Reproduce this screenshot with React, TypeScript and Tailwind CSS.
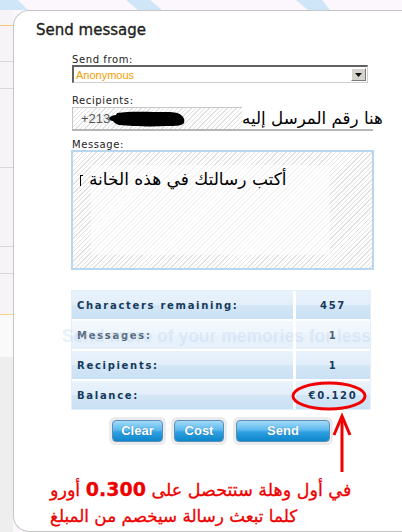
import React from "react";

const hatch =
  "bg-[image:repeating-linear-gradient(135deg,#e2e2e2_0px,#e2e2e2_1px,#ffffff_1px,#ffffff_3.2px)]";

function Label({ children }: { children: React.ReactNode }) {
  return (
    <div className="h-[11px] leading-[11px] text-[10px] tracking-[0.6px] text-[#222]">
      {children}
    </div>
  );
}

function Row({
  label,
  value,
  faded,
}: {
  label: string;
  value: string;
  faded?: boolean;
}) {
  const bg = faded
    ? "bg-[image:linear-gradient(#f3f8fd,#eef5fc_50%,#e9f2fb_51%,#e6f0fa)]"
    : "bg-[image:linear-gradient(#e9f3fc,#e2eefa_48%,#d3e6f6_52%,#cae0f4)]";
  const color = faded ? "text-[#4f6070]" : "text-[#153a5c]";
  return (
    <div className="flex h-[28px] gap-[3px]">
      <div
        className={`w-[221px] h-full flex items-center pl-[5px] text-[10px] font-bold tracking-[1.7px] ${bg} ${color}`}
      >
        {label}
      </div>
      <div
        className={`flex-1 h-full flex items-center justify-center text-[10px] font-bold tracking-[1.7px] ${bg} ${color}`}
      >
        {value}
      </div>
    </div>
  );
}

function Btn({ w, label, ml }: { w: string; label: string; ml: string }) {
  return (
    <div className={`${w} ${ml} h-[28px] rounded-[6px] bg-[#ebebeb] p-[3px]`}>
      <div className="h-[22px] w-full rounded-[4px] border border-[#5b8fb9] bg-[image:linear-gradient(#a3daf8,#5bb9ee_45%,#2ea0e0_55%,#0d86cb)] flex items-center justify-center text-white font-bold text-[13px] font-['Liberation_Sans',sans-serif] [text-shadow:0_0_1px_rgba(0,60,120,0.5)]">
        {label}
      </div>
    </div>
  );
}

export default function App() {
  return (
    <div className="relative w-[402px] h-[532px] overflow-hidden bg-[#fcf7fc] font-['DejaVu_Sans',sans-serif]">
      {/* top decorative band */}
      <svg width="402" height="10" className="block">
        <rect x="0" y="0" width="402" height="10" fill="#fcf7fc" />
        <polygon points="-10,0 18,0 28,10 0,10" fill="#cfe5f8" />
        <polygon points="126,0 150,0 162,10 138,10" fill="#cfe5f8" />
        <polygon points="296,0 322,0 330,10 308,10" fill="#cfe5f8" />
      </svg>

      <div className="flex h-[522px]">
        {/* left strip */}
        <div className="w-[13px] h-full flex flex-col bg-[#f6f4f7]">
          <div className="h-[15px]" />
          <div className="h-px bg-[#f8c878]" />
          <div className="h-[35px]" />
          <div className="h-px bg-[#d8d8d8]" />
          <div className="h-[26px]" />
          <div className="h-px bg-[#d8d8d8]" />
          <div className="h-[78px]" />
          <div className="h-px bg-[#d8d8d8]" />
          <div className="h-[78px]" />
          <div className="h-px bg-[#d8d8d8]" />
          <div className="h-[26px]" />
          <div className="h-px bg-[#d8d8d8]" />
          <div className="h-[40px]" />
          <div className="h-px bg-[#f9d383]" />
          <div className="h-[42px] bg-[#fafafa]" />
          <div className="flex-1 bg-[#efeeef]" />
        </div>

        {/* panel */}
        <div className="flex-1 h-full bg-white border-l border-t border-b border-[#c6c6c6] rounded-tl-[16px] rounded-bl-[16px] flex flex-col">
          <div className="mt-[10px] ml-[22px] h-[18px] leading-[18px] text-[15px] text-[#1e1e1e] [-webkit-text-stroke:0.35px_#1e1e1e]">
            Send message
          </div>

          <div className="ml-[58px] w-[301px] flex flex-col">
            <div className="mt-[15px]">
              <Label>Send from:</Label>
            </div>
            <div className="h-[18px] w-[296px] flex items-center border-t-2 border-l-2 border-b border-r border-[#626262] border-b-[#d0d0d0] border-r-[#d0d0d0] bg-white">
              <span className="flex-1 pl-[2px] text-[11px] leading-[14px] text-[#f59d00] font-['Liberation_Sans',sans-serif]">
                Anonymous
              </span>
              <div className="w-[15px] h-[13px] mr-[1px] bg-[#d6d3cd] border border-t-white border-l-white border-b-[#7a7a7a] border-r-[#7a7a7a] flex items-center justify-center">
                <svg width="7" height="4" viewBox="0 0 7 4">
                  <polygon points="0,0 7,0 3.5,4" fill="#111" />
                </svg>
              </div>
            </div>

            <div className="mt-[12px]">
              <Label>Recipients:</Label>
            </div>
            <div className="mt-[1px] w-[301px] h-[24px] flex border-b-2 border-[#b6b6b6]">
              <div
                className={`shrink-0 w-[170px] h-full border-t border-l border-[#c6c6c6] ${hatch} flex items-center pl-[8px]`}
              >
                <span className="text-[13px] text-[#555] font-['Liberation_Sans',sans-serif]">
                  +213
                </span>
                <svg width="78" height="18" viewBox="0 0 78 18" className="-ml-[1px]">
                  <path
                    d="M0,8 C2,6 4,5 7,5 L8,3 C20,1 40,2 58,2 C66,2 70,3 72,5 C75,7 76,10 75,13 C73,16 66,16 58,16 C40,17 22,16 10,15 C6,14 5,12 4,11 C2,11 0,10 0,8 Z"
                    fill="#000"
                  />
                </svg>
              </div>
              <div className="w-[131px] shrink-0 h-full flex items-center">
                <span
                  dir="rtl"
                  className="whitespace-nowrap text-[16.7px] leading-[22px] text-black"
                >
                  هنا رقم المرسل إليه
                </span>
              </div>
            </div>

            <div className="mt-[8px]">
              <Label>Message:</Label>
            </div>
            <div
              className={`relative -ml-px w-[303px] h-[120px] border-2 border-[#b8d7ef] ${hatch} pt-[13px] pl-[18px]`}
            >
              <div className="w-[239px] h-[90px] bg-white/60" />
              <div className="absolute left-[7px] top-[15px] h-[24px] flex items-center gap-[6px]">
                <span className="w-[3px] h-[11px] border-l border-t border-black mt-[2px]" />
                <span
                  dir="rtl"
                  className="whitespace-nowrap text-[17px] leading-[24px] text-black"
                >
                  أكتب رسالتك في هذه الخانة
                </span>
              </div>
            </div>

            <div className="mt-[20px] -ml-px w-[300px] border border-[#e3eff9] bg-white flex flex-col gap-[2px]">
              <Row label="Characters remaining:" value="457" />
              <Row label="Messages:" value="1" faded />
              <Row label="Recipients:" value="1" />
              <Row label="Balance:" value="€0.120" />
            </div>

            <div className="mt-[7px] flex">
              <Btn w="w-[57px]" ml="ml-[37px]" label="Clear" />
              <Btn w="w-[56px]" ml="ml-[5px]" label="Cost" />
              <Btn w="w-[100px]" ml="ml-[6px]" label="Send" />
            </div>
          </div>

          <div className="mt-[31px] ml-[36px] flex flex-col items-start text-[#ee0000] text-[17.5px] leading-[26px] [-webkit-text-stroke:0.3px_#ee0000]">
            <span dir="rtl" className="whitespace-nowrap">
              في أول وهلة ستتحصل على{" "}
              <b className="font-bold text-[19px]">0.300</b> أورو
            </span>
            <span dir="rtl" className="whitespace-nowrap text-[16.8px]">
              كلما تبعث رسالة سيخصم من المبلغ
            </span>
          </div>
        </div>
      </div>

      {/* ghost watermark text */}
      <div className="absolute left-[22px] top-[325px] w-[349px] h-[22px] overflow-hidden flex justify-end pointer-events-none">
        <span className="whitespace-nowrap text-[17.5px] leading-[22px] font-bold font-['Liberation_Sans',sans-serif] text-[rgba(175,205,238,0.3)]">
          Send more of your memories for less
        </span>
      </div>

      {/* red annotations */}
      <svg
        className="absolute left-0 top-0 pointer-events-none"
        width="402"
        height="532"
      >
        <ellipse
          cx="329"
          cy="396"
          rx="36"
          ry="13"
          fill="none"
          stroke="#f00000"
          strokeWidth="3"
        />
        <line x1="342" y1="419" x2="342" y2="472" stroke="#f00000" strokeWidth="3" />
        <polyline
          points="334,435 342,416 350,435"
          fill="none"
          stroke="#f00000"
          strokeWidth="3"
        />
      </svg>
    </div>
  );
}
